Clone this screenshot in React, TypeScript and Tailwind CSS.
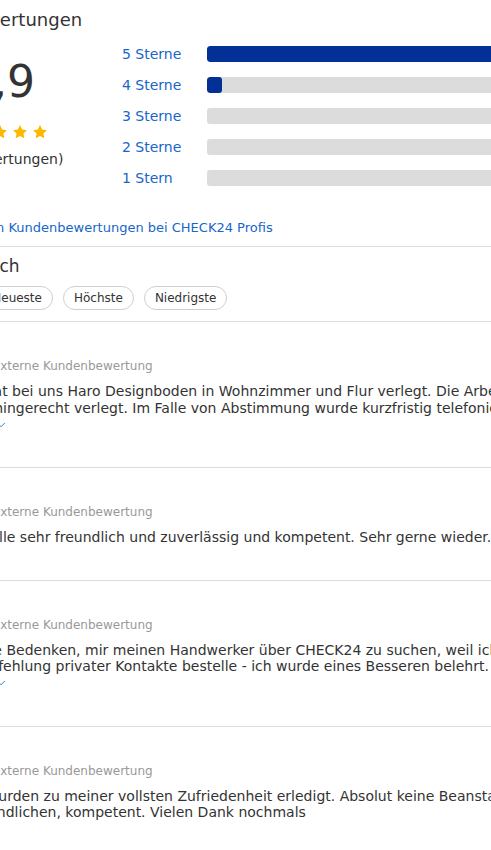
import { ChevronDown } from 'lucide-react'

const blue = 'text-[#1766c8]'

const Star = ({ size = 16 }: { size?: number }) => (
  <svg width={size} height={size} viewBox="0 0 24 24" className="shrink-0">
    <path
      d="M12 1.6l3.2 6.6 7.2 1-5.2 5.1 1.3 7.2L12 18.1l-6.5 3.4 1.3-7.2L1.6 9.2l7.2-1z"
      fill="#fbb900"
    />
  </svg>
)

const bars = [
  { label: '5 Sterne', pct: 94 },
  { label: '4 Sterne', pct: 3 },
  { label: '3 Sterne', pct: 0 },
  { label: '2 Sterne', pct: 0 },
  { label: '1 Stern', pct: 0 },
]

const reviews = [
  {
    name: 'Thomas K.',
    lines: [
      'Herr Werner hat bei uns Haro Designboden in Wohnzimmer und Flur verlegt. Die Arbeiten wurden sauber und',
      'Exakt und termingerecht verlegt. Im Falle von Abstimmung wurde kurzfristig telefoniert.',
    ],
    more: true,
  },
  {
    name: 'Sabine M.',
    lines: ['Gute Arbeit - Alle sehr freundlich und zuverlässig und kompetent. Sehr gerne wieder.'],
    more: false,
  },
  {
    name: 'Jörg W.',
    lines: [
      'Ich hatte große Bedenken, mir meinen Handwerker über CHECK24 zu suchen, weil ich Handwerker sonst',
      'gerne auf Empfehlung privater Kontakte bestelle - ich wurde eines Besseren belehrt.',
    ],
    more: true,
  },
  {
    name: 'Petra S.',
    lines: [
      'Die Arbeiten wurden zu meiner vollsten Zufriedenheit erledigt. Absolut keine Beanstandungen. Sehr',
      'Mit einem freundlichen, kompetent. Vielen Dank nochmals',
    ],
    more: false,
  },
]

export default function App() {
  return (
    <div className="w-[491px] h-[850px] overflow-hidden bg-white font-['DejaVu_Sans',sans-serif] text-[#333]">
      <div className="-ml-[105px] w-[820px]">
        <h2 className="pt-2 text-[18px] leading-6">Kundenbewertungen</h2>

        <div className="mt-[14px] flex">
          <div className="w-[210px] shrink-0 flex flex-col items-center pt-[14px]">
            <div className="text-[44px] leading-[44px]">4,9</div>
            <div className="mt-[20px] flex gap-1">
              {[0, 1, 2, 3, 4].map((i) => (
                <Star key={i} />
              ))}
            </div>
            <div className="mt-[11px] text-[14px] leading-4">(53 Bewertungen)</div>
          </div>

          <div className="ml-[17px] flex-1 flex flex-col gap-[15px]">
            {bars.map((b) => (
              <div key={b.label} className="flex items-center h-4">
                <span className={`w-[85px] shrink-0 text-[14px] leading-4 ${blue}`}>{b.label}</span>
                <div className="flex-1 h-4 rounded-[3px] bg-[#dcdcdc] overflow-hidden">
                  <div className="h-full rounded-[3px] bg-[#023096]" style={{ width: `${b.pct}%` }} />
                </div>
              </div>
            ))}
          </div>
        </div>

        <a className={`block mt-[34px] text-[13px] leading-4 ${blue}`}>
          Mehr Info zu den Kundenbewertungen bei CHECK24 Profis
        </a>
        <div className="mt-[10px] border-t border-[#dcdcdc]" />

        <div className="mt-2 text-[17px] leading-[22px]">Sortieren nach</div>
        <div className="mt-[9px] flex gap-2.5">
          {['Relevanz', 'Neueste', 'Höchste', 'Niedrigste'].map((p) => (
            <button
              key={p}
              className="h-6 px-[10px] rounded-full border border-[#cfcfcf] text-[12px] leading-[22px] text-[#333]"
            >
              {p}
            </button>
          ))}
        </div>
        <div className="mt-[11px] border-t border-[#dcdcdc]" />

        {reviews.map((r) => (
          <div key={r.name} className="border-b border-[#dcdcdc] pt-[17px] pb-[34px]">
            <div className="text-[14px] font-bold leading-[19px]">{r.name}</div>
            <div className="flex items-center gap-[10px] text-[12px] leading-4 text-[#999]">
              <div className="flex gap-[2px]">
                {[0, 1, 2, 3, 4].map((i) => (
                  <Star key={i} size={16} />
                ))}
              </div>
              <span>externe Kundenbewertung</span>
            </div>
            <div className="mt-[9px] text-[14px] leading-[16.5px]">
              {r.lines.map((l) => (
                <div key={l} className="whitespace-nowrap">
                  {l}
                </div>
              ))}
            </div>
            {r.more && (
              <div className={`flex items-center gap-[3px] text-[13px] leading-[17px] ${blue}`}>
                <span>Mehr anzeigen</span>
                <ChevronDown size={14} strokeWidth={1.5} />
              </div>
            )}
          </div>
        ))}
      </div>
    </div>
  )
}
